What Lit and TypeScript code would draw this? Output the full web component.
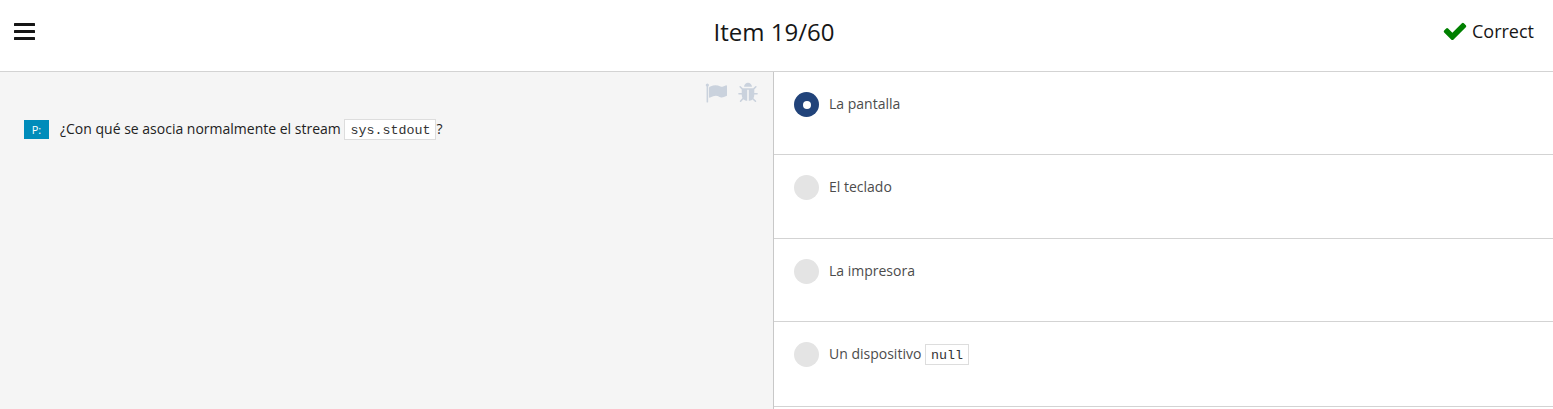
import { LitElement, html, css, svg } from "lit";
import { customElement, property } from "lit/decorators.js";

const FLAG = svg`<path d="M320 256q0 72-64 110v1266q0 13-9.5 22.5t-22.5 9.5h-64q-13 0-22.5-9.5t-9.5-22.5v-1266q-64-38-64-110 0-53 37.5-90.5t90.5-37.5 90.5 37.5 37.5 90.5zm1472 64v763q0 25-12.5 38.5t-39.5 27.5q-215 116-369 116-61 0-123.5-22t-108.5-48-115.5-48-142.5-22q-192 0-464 146-17 9-33 9-26 0-45-19t-19-45v-742q0-32 31-55 21-14 79-43 236-120 421-120 107 0 200 29t219 88q38 19 88 19 54 0 117.5-21t110-47 88-47 54.5-21q26 0 45 19t19 45z"/>`;
const BUG = svg`<path d="M1696 960q0 26-19 45t-45 19h-224q0 171-67 290l208 209q19 19 19 45t-19 45q-18 19-45 19t-45-19l-198-197q-5 5-15 13t-42 28.5-65 36.5-82 29-97 13v-896h-128v896q-51 0-101.5-13.5t-87-33-66-39-43.5-32.5l-15-14-183 207q-20 21-48 21-24 0-43-16-19-18-20.5-44.5t15.5-46.5l202-227q-58-114-58-274h-224q-26 0-45-19t-19-45 19-45 45-19h224v-294l-173-173q-19-19-19-45t19-45 45-19 45 19l173 173h844l173-173q19-19 45-19t45 19 19 45-19 45l-173 173v294h224q26 0 45 19t19 45zm-480-576h-640q0-133 93.5-226.5t226.5-93.5 226.5 93.5 93.5 226.5z"/>`;
const CHECK = svg`<path d="M1671 566q0 40-28 68l-724 724-136 136q-28 28-68 28t-68-28l-136-136-362-362q-28-28-28-68t28-68l136-136q28-28 68-28t68 28l294 295 656-657q28-28 68-28t68 28l136 136q28 28 28 68z"/>`;

const codeStyle = css`
  code {
    display: inline-block;
    box-sizing: border-box;
    height: 21px;
    margin-bottom: 1px;
    padding: 0 5px;
    border: 1px solid #ddd;
    background: #fff;
    color: #333;
    font: 13.33px/21px "Liberation Mono", monospace;
    vertical-align: middle;
  }
`;

@customElement("answer-option")
class AnswerOption extends LitElement {
  @property() label = "";
  @property() code = "";
  @property({ type: Boolean, reflect: true }) selected = false;

  static styles = [
    codeStyle,
    css`
      :host {
        display: flex;
        align-items: flex-start;
        gap: 10px;
        box-sizing: border-box;
        padding: 20px 20px 0;
        border-bottom: 1px solid #d3d3d3;
      }
      .radio {
        display: flex;
        align-items: center;
        justify-content: center;
        flex: none;
        width: 25px;
        height: 25px;
        border-radius: 50%;
        background: #e4e4e4;
      }
      :host([selected]) .radio {
        background: #21437a;
      }
      :host([selected]) .radio::after {
        content: "";
        width: 8px;
        height: 8px;
        border-radius: 50%;
        background: #fff;
      }
      .label {
        font-size: 14px;
        line-height: 24px;
        color: #4c4c4c;
        white-space: pre;
      }
    `,
  ];

  render() {
    return html`<span class="radio"></span>
      <span class="label">${this.label}${this.code ? html` <code>${this.code}</code>` : ""}</span>`;
  }
}

@customElement("app-root")
class AppRoot extends LitElement {
  static styles = [
    codeStyle,
    css`
      :host {
        display: flex;
        flex-direction: column;
        height: 409px;
        overflow: hidden;
        background: #fff;
        font-family: "Open Sans", sans-serif;
        color: #161616;
      }
      header {
        display: grid;
        grid-template-columns: 1fr auto 1fr;
        align-items: center;
        box-sizing: border-box;
        height: 72px;
        padding: 0 19px 8px 14px;
        border-bottom: 1px solid #d3d3d3;
      }
      svg {
        display: block;
        fill: currentColor;
      }
      h1 {
        margin: 0;
        font-size: 24px;
        font-weight: 400;
        line-height: 32px;
      }
      .result {
        display: flex;
        justify-content: flex-end;
        align-items: center;
        gap: 4px;
        margin-bottom: 2px;
        font-size: 18px;
        line-height: 24px;
      }
      .result svg {
        color: #008000;
      }
      main {
        flex: 1;
        display: grid;
        grid-template-columns: 774px 1fr;
        min-height: 0;
      }
      .question {
        box-sizing: border-box;
        background: #f5f5f5;
        border-right: 1px solid #c8c8c8;
      }
      .tools {
        display: flex;
        justify-content: flex-end;
        gap: 10px;
        padding: 10px 14px 0 0;
        color: #cad2dd;
      }
      .prompt {
        display: flex;
        align-items: center;
        padding: 14px 24px 0;
        font-size: 14px;
        line-height: 22px;
        color: #222;
        white-space: pre;
      }
      .tag {
        width: 25px;
        height: 19px;
        margin-right: 11px;
        background: #008cba;
        color: #fff;
        font-size: 11px;
        line-height: 19px;
        text-align: center;
      }
      .answers {
        display: grid;
        grid-template-rows: 83.3px 83.4px 83.3px 85px;
      }
    `,
  ];

  render() {
    return html`
      <header>
        <svg width="21" height="17" viewBox="0 0 21 17">
          <rect width="21" height="3" rx=".5" y="0" /><rect width="21" height="3" rx=".5" y="7" /><rect width="21" height="3" rx=".5" y="14" />
        </svg>
        <h1>Item 19/60</h1>
        <div class="result">
          <svg width="26" height="26" viewBox="0 0 1792 1792">${CHECK}</svg>
          <span>Correct</span>
        </div>
      </header>
      <main>
        <section class="question">
          <div class="tools">
            <svg width="22" height="22" viewBox="0 0 1792 1792">${FLAG}</svg>
            <svg width="22" height="22" viewBox="0 0 1792 1792">${BUG}</svg>
          </div>
          <div class="prompt"><span class="tag">P:</span><span>¿Con qué se asocia normalmente el stream <code>sys.stdout</code>?</span></div>
        </section>
        <section class="answers">
          <answer-option label="La pantalla" selected></answer-option>
          <answer-option label="El teclado"></answer-option>
          <answer-option label="La impresora"></answer-option>
          <answer-option label="Un dispositivo" code="null"></answer-option>
        </section>
      </main>
    `;
  }
}
